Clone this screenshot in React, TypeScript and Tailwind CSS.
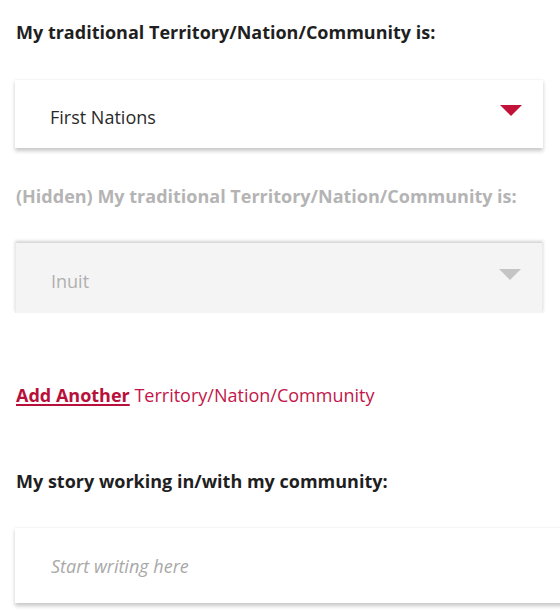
import React from 'react';

const font = { fontFamily: '"Open Sans", "Liberation Sans", sans-serif' };

const Caret: React.FC<{ color: string }> = ({ color }) => (
  <svg width="22" height="11" viewBox="0 0 22 11" className="block">
    <polygon points="0,0 22,0 11,11" fill={color} />
  </svg>
);

export default function App() {
  return (
    <div className="w-[560px] h-[615px] overflow-hidden bg-white" style={font}>
      <div className="pl-[15px] pr-[17px] pt-[20px]">
        {/* Territory select */}
        <p className="pl-px text-[18px] font-bold leading-[24px] text-[#1f1f1f]">
          My traditional Territory/Nation/Community is:
        </p>
        <div className="mt-[35px] h-[69px] bg-white flex items-center justify-between pl-[35px] pr-[21px] shadow-[0_3px_4px_rgba(0,0,0,0.22)] border-t border-[#f6f6f6]">
          <span className="text-[18px] text-[#2a2a2a] leading-none pt-[5px]">First Nations</span>
          <span className="-mt-[8px]">
            <Caret color="#c2123a" />
          </span>
        </div>

        {/* Hidden select */}
        <p className="mt-[36px] pl-px text-[18px] font-bold leading-[24px] text-[#b4b4b4]">
          (Hidden) My traditional Territory/Nation/Community is:
        </p>
        <div className="mt-[35px] h-[70px] bg-[#f4f4f4] flex items-center justify-between pl-[35px] pr-[21px] shadow-[0_-2px_3px_rgba(0,0,0,0.18)] border-x border-[#ebebeb]">
          <span className="text-[18px] text-[#b0b0b0] leading-none pt-[6px]">Inuit</span>
          <span className="-mt-[8px]">
            <Caret color="#c4c4c4" />
          </span>
        </div>

        {/* Add another */}
        <p className="mt-[70px] pl-px text-[18px] leading-[24px] text-[#c2164a]">
          <a href="#" className="font-bold underline underline-offset-2 decoration-[2px] text-[#b8103a]">
            Add Another
          </a>{' '}
          Territory/Nation/Community
        </p>

        {/* Story */}
        <p className="mt-[62px] pl-px text-[18px] font-bold leading-[24px] text-[#1f1f1f]">
          My story working in/with my community:
        </p>
      </div>
      <div className="pl-[15px] mt-[34px]">
        <div className="w-[560px] h-[76px] bg-white flex items-center pl-[36px] shadow-[0_3px_4px_rgba(0,0,0,0.22)] border-t border-[#f6f6f6]">
          <span className="text-[18px] italic text-[#a8a8a8] leading-none">Start writing here</span>
        </div>
      </div>
    </div>
  );
}
